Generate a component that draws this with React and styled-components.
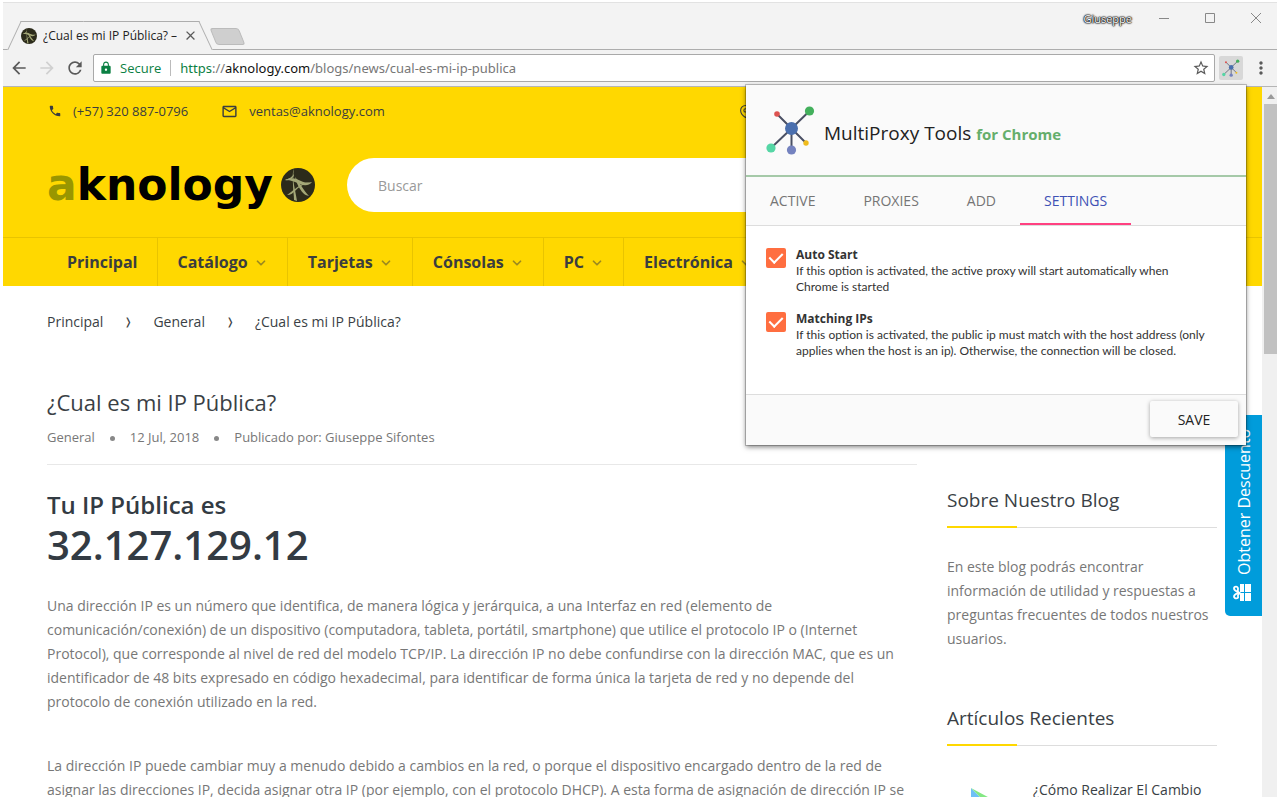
import React, { useState } from 'react';
import styled, { createGlobalStyle } from 'styled-components';
import {
  MdArrowBack,
  MdArrowForward,
  MdClose,
  MdLock,
  MdMailOutline,
  MdMoreVert,
  MdPhone,
  MdRefresh,
  MdStarBorder,
} from 'react-icons/md';
import { FiChevronDown, FiMapPin } from 'react-icons/fi';

const menu = [
  { label: 'Principal' },
  { label: 'Catálogo', sub: true },
  { label: 'Tarjetas', sub: true },
  { label: 'Cónsolas', sub: true },
  { label: 'PC', sub: true },
  { label: 'Electrónica', sub: true },
];

const tabs = ['Active', 'Proxies', 'Add', 'Settings'];

const options = [
  {
    id: 'auto-start',
    title: 'Auto Start',
    text: 'If this option is activated, the active proxy will start automatically when Chrome is started',
  },
  {
    id: 'matching-ips',
    title: 'Matching IPs',
    text: 'If this option is activated, the public ip must match with the host address (only applies when the host is an ip). Otherwise, the connection will be closed.',
  },
];

const ProxyLogo = ({ size }) => (
  <svg width={size} height={size} viewBox="0 0 50 50" aria-hidden="true">
    <g stroke="#4a5064" strokeWidth="2">
      <path d="M25.500 23.500 11 9M25.500 23.500 43.500 6M25.500 23.500 5 43M25.500 23.500V45M25.500 23.500 40 38" />
    </g>
    <circle cx="25.500" cy="23.500" r="6.500" fill="#4a6fae" />
    <circle cx="11" cy="9" r="2.800" fill="#dd5350" />
    <circle cx="43.500" cy="6" r="4.600" fill="#43b05c" />
    <circle cx="5" cy="43" r="4.600" fill="#55d6a5" />
    <circle cx="25.500" cy="45" r="4.600" fill="#7482bf" />
    <circle cx="40" cy="38" r="2.700" fill="#efbb1c" />
  </svg>
);

const Globe = ({ size }) => (
  <svg width={size} height={size} viewBox="0 0 34 34" aria-hidden="true">
    <circle cx="17" cy="17" r="17" fill="#2c2b1b" />
    <g fill="#a3a777">
      <path d="M13 1c-1 5-1 11 0 16s2 10 3 16l-3-1c0-5-1-9-1-15S11 5 13 1z" />
      <path d="M4 12c5-3 11-2 16 1 4 2 7 2 11 1-3 4-8 4-12 2-5-2-9-4-15-4z" />
      <path d="M31 14c-7 1-12 4-16 8-3 3-5 5-9 5 3-2 5-4 8-6 5-4 10-7 17-7z" />
      <path d="M14 9c3 3 5 7 7 10s4 6 7 9c-5-1-7-4-9-7s-4-8-5-12z" />
      <path d="M4 12c4-1 7-3 9-6 0 4-4 7-9 6z" />
    </g>
  </svg>
);

const Gift = () => (
  <svg width="20" height="20" viewBox="0 0 20 20" aria-hidden="true">
    <g fill="#fff">
      <path d="M7 1h4v8H7zM12 1h6v8h-6zM7 10h4v8H7zM12 10h6v8h-6z" />
    </g>
    <g fill="none" stroke="#fff" strokeWidth="1.800">
      <path d="M6 9.500C4 8.500 1 8 1 5.500S5 3 5 5.500 4 8.500 6 9.500 4 11 5 13.500 1 16 1 13.500 4 10.500 6 9.500z" />
    </g>
  </svg>
);

const App = () => {
  const [tab, setTab] = useState('Settings');
  const [checked, setChecked] = useState({
    'auto-start': true,
    'matching-ips': true,
  });

  const toggle = (id) => setChecked((prev) => ({ ...prev, [id]: !prev[id] }));

  return (
    <>
      <GlobalStyle />
      <Browser>
        <TitleBar>
          <BrowserTab>
            <Globe size={16} />
            <TabTitle>¿Cual es mi IP Pública? –</TabTitle>
            <IconButton aria-label="Close tab">
              <MdClose size={15} />
            </IconButton>
          </BrowserTab>
          <NewTab aria-label="New tab" />
          <WindowControls>
            <Profile>Giuseppe</Profile>
            <IconButton aria-label="Minimize">
              <svg width="10" height="10" stroke="#888">
                <path d="M0 5.500h10" />
              </svg>
            </IconButton>
            <IconButton aria-label="Maximize">
              <svg width="10" height="10" stroke="#888" fill="none">
                <path d="M.5.500h9v9h-9z" />
              </svg>
            </IconButton>
            <IconButton aria-label="Close">
              <svg width="10" height="10" stroke="#888">
                <path d="M0 0l10 10M10 0 0 10" />
              </svg>
            </IconButton>
          </WindowControls>
        </TitleBar>

        <Toolbar>
          <IconButton aria-label="Back">
            <MdArrowBack size={20} />
          </IconButton>
          <IconButton aria-label="Forward" disabled>
            <MdArrowForward size={20} />
          </IconButton>
          <IconButton aria-label="Reload">
            <MdRefresh size={20} />
          </IconButton>
          <Omnibox>
            <Secure>
              <MdLock size={14} />
              Secure
            </Secure>
            <Url>
              <b>https</b>://<i>aknology.com</i>/blogs/news/cual-es-mi-ip-publica
            </Url>
            <IconButton aria-label="Bookmark">
              <MdStarBorder size={18} />
            </IconButton>
          </Omnibox>
          <ExtensionButton aria-label="MultiProxy Tools">
            <ProxyLogo size={18} />
          </ExtensionButton>
          <IconButton aria-label="Menu">
            <MdMoreVert size={20} />
          </IconButton>
        </Toolbar>

        <Viewport>
          <Site>
            <Header>
              <TopBar>
                <Contact href="tel:+573208870796">
                  <MdPhone size={14} />
                  (+57) 320 887-0796
                </Contact>
                <Contact href="mailto:ventas@aknology.com">
                  <MdMailOutline size={17} />
                  ventas@aknology.com
                </Contact>
                <Location href="#tiendas" aria-label="Ubicación">
                  <FiMapPin size={13} />
                </Location>
              </TopBar>
              <HeaderMain>
                <Brand href="#inicio">
                  <span>
                    <em>a</em>knology
                  </span>
                  <Globe size={34} />
                </Brand>
                <Search type="search" placeholder="Buscar" aria-label="Buscar" />
              </HeaderMain>
              <Nav>
                {menu.map(({ label, sub }) => (
                  <NavLink key={label} href={`#${label}`}>
                    {label}
                    {sub && <FiChevronDown size={14} strokeWidth={3} />}
                  </NavLink>
                ))}
              </Nav>
            </Header>

            <Breadcrumb aria-label="Breadcrumb">
              <a href="#principal">Principal</a>
              <span>❭</span>
              <a href="#general">General</a>
              <span>❭</span>
              <a href="#articulo">¿Cual es mi IP Pública?</a>
            </Breadcrumb>

            <Columns>
              <Article>
                <h1>¿Cual es mi IP Pública?</h1>
                <Meta>
                  <li>General</li>
                  <li>12 Jul, 2018</li>
                  <li>Publicado por: Giuseppe Sifontes</li>
                </Meta>
                <h2>Tu IP Pública es</h2>
                <Address>32.127.129.12</Address>
                <p>
                  Una dirección IP es un número que identifica, de manera lógica
                  y jerárquica, a una Interfaz en red (elemento de
                  comunicación/conexión) de un dispositivo (computadora, tableta,
                  portátil, smartphone) que utilice el protocolo IP o (Internet
                  Protocol), que corresponde al nivel de red del modelo TCP/IP. La
                  dirección IP no debe confundirse con la dirección MAC, que es un
                  identificador de 48 bits expresado en código hexadecimal, para
                  identificar de forma única la tarjeta de red y no depende del
                  protocolo de conexión utilizado en la red.
                </p>
                <p>
                  La dirección IP puede cambiar muy a menudo debido a cambios en la
                  red, o porque el dispositivo encargado dentro de la red de
                  asignar las direcciones IP, decida asignar otra IP (por ejemplo,
                  con el protocolo DHCP). A esta forma de asignación de dirección
                  IP se
                </p>
              </Article>
              <Sidebar>
                <section>
                  <SideTitle>Sobre Nuestro Blog</SideTitle>
                  <p>
                    En este blog podrás encontrar información de utilidad y
                    respuestas a preguntas frecuentes de todos nuestros usuarios.
                  </p>
                </section>
                <section>
                  <SideTitle>Artículos Recientes</SideTitle>
                  <Recent href="#recientes">
                    <svg width="38" height="38" viewBox="0 0 38 38" aria-hidden="true">
                      <path d="M0 0 18 18 0 36z" fill="#6fc0f5" />
                      <path d="M0 0 30 16 20 20z" fill="#84e884" />
                    </svg>
                    ¿Cómo Realizar El Cambio
                  </Recent>
                </section>
              </Sidebar>
            </Columns>

            <Discount>
              <Gift />
              <span>Obtener Descuento</span>
            </Discount>
          </Site>
          <Scrollbar aria-hidden="true">
            <i />
            <b />
          </Scrollbar>
        </Viewport>

        <Popup role="dialog" aria-label="MultiProxy Tools">
          <PopupHeader>
            <ProxyLogo size={50} />
            <h2>
              MultiProxy Tools <small>for Chrome</small>
            </h2>
          </PopupHeader>
          <Tabs role="tablist">
            {tabs.map((name) => (
              <Tab
                key={name}
                role="tab"
                aria-selected={tab === name}
                $active={tab === name}
                onClick={() => setTab(name)}
              >
                {name}
              </Tab>
            ))}
          </Tabs>
          <Options>
            {options.map(({ id, title, text }) => (
              <Option key={id} htmlFor={id}>
                <Checkbox
                  id={id}
                  type="checkbox"
                  checked={checked[id]}
                  onChange={() => toggle(id)}
                />
                <span>
                  <strong>{title}</strong>
                  {text}
                </span>
              </Option>
            ))}
          </Options>
          <PopupFooter>
            <Save>Save</Save>
          </PopupFooter>
        </Popup>
      </Browser>
    </>
  );
};

const GlobalStyle = createGlobalStyle`
  * {
    box-sizing: border-box;
  }

  body {
    margin: 0;
    background: #fff;
    font-family: 'Open Sans', 'Noto Sans', sans-serif;
  }

  h1, h2, h3, p, ul {
    margin: 0;
    padding: 0;
  }

  a {
    color: inherit;
    text-decoration: none;
  }

  button, input {
    font-family: inherit;
  }

  svg {
    flex-shrink: 0;
  }
`;

const Browser = styled.div`
  position: relative;
  display: flex;
  flex-direction: column;
  height: 100vh;
  padding: 2px 3px 3px;
  overflow: hidden;
`;

const TitleBar = styled.div`
  display: flex;
  align-items: flex-end;
  height: 48px;
  padding-left: 11px;
  background: #f3f3f3;
  border-top: 1px solid #e2e2e2;
  border-bottom: 1px solid #adadad;
`;

const IconButton = styled.button`
  display: flex;
  align-items: center;
  padding: 0;
  border: 0;
  background: none;
  color: #5a5a5a;

  &:disabled {
    color: #d0d0d0;
  }
`;

const BrowserTab = styled.div`
  position: relative;
  z-index: 0;
  display: flex;
  align-items: center;
  gap: 6px;
  width: 192px;
  height: 29px;
  margin-bottom: -1px;
  padding: 0 8px 0 7px;

  /* slanted sides of the tab */
  &::before,
  &::after {
    content: '';
    position: absolute;
    z-index: -1;
    top: 0;
    bottom: 0;
    background: #f2f2f2;
    border-top: 1px solid #adadad;
  }

  &::before {
    left: 0;
    width: 60%;
    border-left: 1px solid #adadad;
    transform: skewX(-25deg);
  }

  &::after {
    right: 0;
    width: 60%;
    border-right: 1px solid #adadad;
    transform: skewX(25deg);
  }
`;

const TabTitle = styled.span`
  flex: 1;
  overflow: hidden;
  font-size: 12px;
  white-space: nowrap;
  color: #222;
`;

const NewTab = styled.button`
  width: 29px;
  height: 17px;
  margin: 0 0 4px 7px;
  border: 1px solid #bbb;
  border-radius: 3px;
  background: #cfcfcf;
  transform: skewX(22deg);
`;

const WindowControls = styled.div`
  display: flex;
  gap: 36px;
  align-self: flex-start;
  align-items: center;
  height: 30px;
  margin-left: auto;
  padding-right: 16px;
`;

const Profile = styled.span`
  margin-right: -9px;
  font-size: 11px;
  color: #fff;
  text-shadow: 0 0 1px #000, 0 0 1px #000, 0 0 2px #000, 0 0 2px #000;
`;

const Toolbar = styled.div`
  display: flex;
  align-items: center;
  gap: 8px;
  height: 37px;
  padding: 0 6px;
  background: #f2f2f2;
  border-bottom: 1px solid #b5b5b5;
`;

const Omnibox = styled.div`
  display: flex;
  flex: 1;
  align-items: center;
  height: 28px;
  padding: 0 4px 0 5px;
  background: #fff;
  border: 1px solid #a9a9a9;
  border-radius: 2px;
  font-size: 13px;
`;

const Secure = styled.span`
  display: flex;
  align-items: center;
  gap: 7px;
  padding-right: 9px;
  border-right: 1px solid #bbb;
  line-height: 16px;
  color: #0b8043;
`;

const Url = styled.span`
  flex: 1;
  padding-left: 9px;
  font-family: 'Noto Sans', 'Open Sans', sans-serif;
  color: #777;

  b {
    font-weight: 400;
    color: #0b8043;
  }

  i {
    font-style: normal;
    color: #111;
  }
`;

const ExtensionButton = styled(IconButton)`
  justify-content: center;
  width: 24px;
  height: 24px;
  margin: 0 0 0 -4px;
  background: #d8d8d8;
  border-radius: 2px;
`;

const Viewport = styled.div`
  display: flex;
  flex: 1;
  min-height: 0;
`;

const Site = styled.div`
  position: relative;
  flex: 1;
  overflow: hidden;
  color: #777;
`;

const Header = styled.header`
  background: #ffd800;
  color: #3a3d3f;
`;

const TopBar = styled.div`
  display: flex;
  align-items: center;
  gap: 33px;
  height: 48px;
  padding: 0 44px 0 45px;
  font-size: 13px;
`;

const Contact = styled.a`
  display: flex;
  align-items: center;
  gap: 11px;
`;

const Location = styled(Contact)`
  margin-left: auto;
  padding-right: 466px;
`;

const HeaderMain = styled.div`
  display: flex;
  gap: 32px;
  padding: 23px 44px 25px;
`;

const Brand = styled.a`
  display: flex;
  align-items: center;
  justify-content: space-between;
  width: 268px;
  font-family: 'DejaVu Sans', sans-serif;
  font-size: 44px;
  font-weight: 700;
  line-height: 54px;
  color: #000;

  em {
    font-style: normal;
    color: #999600;
  }
`;

const Search = styled.input`
  flex: 1;
  height: 54px;
  padding: 0 31px;
  border: 0;
  border-radius: 27px;
  background: #fff;
  font-size: 14px;

  &::placeholder {
    color: #999;
  }
`;

const Nav = styled.nav`
  display: flex;
  padding: 0 44px;
  border-top: 1px solid #e8c400;
`;

const NavLink = styled.a`
  display: flex;
  align-items: center;
  gap: 6px;
  height: 48px;
  padding: 0 19px 0 20px;
  border-right: 1px solid #e8c400;
  font-size: 16px;
  font-weight: 700;

  svg {
    margin-top: 2px;
    opacity: 0.5;
  }
`;

const Breadcrumb = styled.nav`
  display: flex;
  align-items: center;
  gap: 21px;
  height: 71px;
  padding: 0 44px;
  font-size: 14px;
  line-height: 21px;
  color: #3a3f45;

  span {
    font-size: 10px;
  }
`;

const Columns = styled.div`
  display: grid;
  grid-template-columns: minmax(0, 1fr) 270px;
  gap: 30px;
  padding: 0 45px 0 44px;
  font-size: 14px;
  line-height: 24px;
`;

const Article = styled.article`
  padding-top: 28px;

  h1 {
    font-size: 22px;
    font-weight: 400;
    line-height: 34px;
    color: #3a3f45;
  }

  h2 {
    padding-top: 23px;
    font-size: 24px;
    font-weight: 600;
    line-height: 34px;
    color: #333b43;
  }

  p {
    margin-bottom: 40px;
  }
`;

const Meta = styled.ul`
  display: flex;
  padding: 6px 0 15px;
  border-bottom: 1px solid #e8e8e8;
  font-size: 13px;
  list-style: none;

  li + li::before {
    content: '';
    display: inline-block;
    width: 5px;
    height: 5px;
    margin: 0 15px;
    border-radius: 50%;
    background: #888;
    vertical-align: middle;
  }
`;

const Address = styled.div`
  margin-bottom: 26px;
  font-size: 40px;
  font-weight: 600;
  line-height: 46px;
  color: #333b43;
`;

const Sidebar = styled.aside`
  display: flex;
  flex-direction: column;
  gap: 55px;
  padding-top: 131px;
`;

const SideTitle = styled.h3`
  position: relative;
  margin-bottom: 27px;
  padding-bottom: 15px;
  border-bottom: 1px solid #ddd;
  font-size: 19px;
  font-weight: 400;
  color: #3a3f45;

  &::after {
    content: '';
    position: absolute;
    left: 0;
    bottom: -1px;
    width: 70px;
    height: 2px;
    background: #ffd800;
  }
`;

const Recent = styled.a`
  display: flex;
  gap: 24px;
  padding: 5px 0 0 24px;
  white-space: nowrap;
  color: #3a3f45;

  svg {
    margin-top: 10px;
  }
`;

const Discount = styled.button`
  position: absolute;
  top: 328px;
  right: 0;
  display: flex;
  align-items: center;
  gap: 8px;
  width: 37px;
  height: 201px;
  padding: 13px 10px;
  border: 0;
  border-radius: 0 5px 5px 0;
  background: #009cdb;
  font-size: 16px;
  line-height: 20px;
  color: #fff;
  white-space: nowrap;
  writing-mode: vertical-rl;
  transform: rotate(180deg);

  svg {
    transform: rotate(180deg);
  }
`;

const Scrollbar = styled.div`
  display: flex;
  flex-direction: column;
  align-items: center;
  width: 15px;
  padding-left: 2px;
  background: #f0f0f0;

  i {
    margin: 7px 0 5px;
    border: 4px solid transparent;
    border-top: 0;
    border-bottom: 5px solid #9a9a9a;
  }

  b {
    width: 100%;
    height: 250px;
    background: #c1c1c1;
  }
`;

const Popup = styled.div`
  position: absolute;
  z-index: 2;
  top: 85px;
  right: 34px;
  width: 500px;
  background: #fff;
  box-shadow: 0 0 0 1px rgba(0, 0, 0, 0.2), 0 2px 5px rgba(0, 0, 0, 0.5);
  color: #333;
`;

const PopupHeader = styled.div`
  display: flex;
  align-items: center;
  gap: 8px;
  height: 92px;
  padding: 0 20px;
  background: #fafafa;
  border-bottom: 2px solid #a5c9a8;

  h2 {
    padding-top: 6px;
    font-size: 19px;
    font-weight: 400;
    color: #222;
  }

  small {
    font-size: 15px;
    font-weight: 700;
    color: #65ae6c;
  }
`;

const Tabs = styled.div`
  display: flex;
  height: 49px;
  background: #fafafa;
  border-bottom: 1px solid #ddd;
`;

const Tab = styled.button`
  padding: 0 24px;
  border: 0;
  border-bottom: 2px solid ${({ $active }) => ($active ? '#ff4081' : 'transparent')};
  background: none;
  font-size: 14px;
  font-weight: 500;
  text-transform: uppercase;
  color: ${({ $active }) => ($active ? '#3f51b5' : '#757575')};
`;

const Options = styled.div`
  display: flex;
  flex-direction: column;
  gap: 16px;
  padding: 21px 36px 35px 20px;
`;

const Option = styled.label`
  display: flex;
  align-items: flex-start;
  gap: 10px;
  font-family: Lato, 'Open Sans', sans-serif;
  font-size: 12px;
  line-height: 16px;

  strong {
    display: block;
    font-family: 'Open Sans', sans-serif;
  }
`;

const Checkbox = styled.input`
  appearance: none;
  flex-shrink: 0;
  display: grid;
  place-items: center;
  width: 20px;
  height: 20px;
  margin: 1px 0 0;
  border: 2px solid #ff6e40;
  border-radius: 2px;

  &:checked {
    background: #ff6e40;
  }

  &:checked::after {
    content: '';
    width: 6px;
    height: 11px;
    margin-bottom: 3px;
    border: solid #fff;
    border-width: 0 2px 2px 0;
    transform: rotate(45deg);
  }
`;

const PopupFooter = styled.div`
  display: flex;
  justify-content: flex-end;
  padding: 6px 8px 8px;
  background: #fafafa;
  border-top: 1px solid #ddd;
`;

const Save = styled.button`
  min-width: 88px;
  height: 36px;
  border: 0;
  border-radius: 2px;
  background: #fafafa;
  box-shadow: 0 1px 4px rgba(0, 0, 0, 0.35);
  font-size: 14px;
  font-weight: 500;
  text-transform: uppercase;
  color: #222;
`;

export default App;
